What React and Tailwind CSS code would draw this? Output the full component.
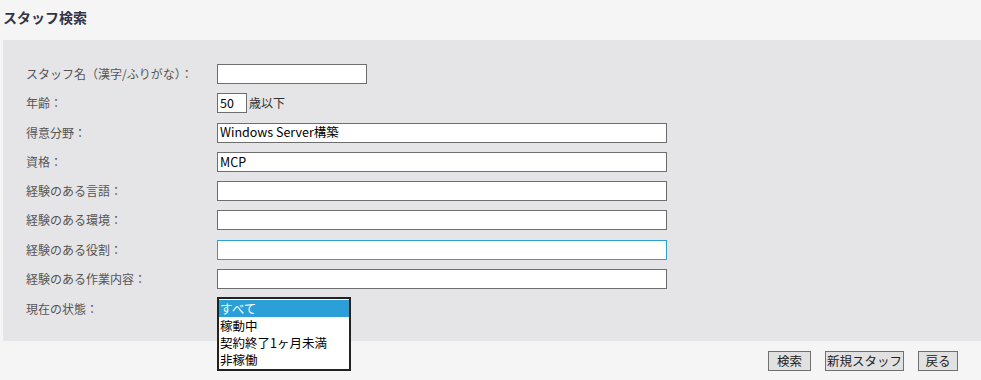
import React from "react";

const font = { fontFamily: '"Noto Sans CJK JP", "Noto Sans", sans-serif' };

function Row({ label, children, className = "" }) {
  return (
    <div className={"flex items-center h-5 " + className}>
      <div className="w-[191px] shrink-0 text-[12px] text-[#555] leading-none">{label}</div>
      {children}
    </div>
  );
}

function Box({ w = "w-[450px]", value = "", focus = false }) {
  return (
    <div
      className={
        "h-5 bg-white border flex items-center px-[2px] text-[12.5px] text-black leading-none whitespace-nowrap " +
        w +
        (focus ? " border-[#2a9fd8]" : " border-[#6e6e6e]")
      }
    >
      {value}
    </div>
  );
}

function Opt({ children, active = false }) {
  return (
    <div
      className={
        "h-[17px] flex items-center pl-[1px] leading-none overflow-hidden whitespace-nowrap " +
        (active ? "bg-[#2a9fd8] text-white" : "text-black")
      }
    >
      {children}
    </div>
  );
}

const btn =
  "h-5 p-0 flex items-center justify-center bg-[#e1e1e1] border border-[#707070] text-[12.5px] text-[#222] leading-none whitespace-nowrap";

export default function App() {
  return (
    <div className="w-[981px] h-[380px] bg-[#f5f5f5] overflow-hidden" style={font}>
      <div className="h-10 pl-[3px] flex items-center">
        <h1 className="text-[14px] font-bold text-[#333344] leading-none -mt-[7px]">スタッフ検索</h1>
      </div>
      <div className="ml-[3px] h-[301px] bg-[#e5e5e7] pt-6 pl-[23px] flex flex-col gap-[9.3px]">
        <Row label="スタッフ名（漢字/ふりがな）：">
          <Box w="w-[150px]" />
        </Row>
        <Row label="年齢：">
          <Box w="w-[30px]" value="50" />
          <span className="ml-[2px] text-[12px] text-[#333] leading-none">歳以下</span>
        </Row>
        <Row label="得意分野：">
          <Box value="Windows Server構築" />
        </Row>
        <Row label="資格：">
          <Box value="MCP" />
        </Row>
        <Row label="経験のある言語：">
          <Box />
        </Row>
        <Row label="経験のある環境：">
          <Box />
        </Row>
        <Row label="経験のある役割：">
          <Box focus />
        </Row>
        <Row label="経験のある作業内容：">
          <Box />
        </Row>
        <div className="flex items-start -mt-[1px]">
          <div className="w-[191px] shrink-0 text-[12px] text-[#555] leading-none pt-[6px]">現在の状態：</div>
          <div className="relative z-10 w-[134px] h-[74px] bg-white border-2 border-[#222] pt-[1px] text-[12.5px]">
            <Opt active>すべて</Opt>
            <Opt>稼動中</Opt>
            <Opt>契約終了1ヶ月未満</Opt>
            <Opt>非稼働</Opt>
          </div>
        </div>
      </div>
      <div className="flex justify-end gap-[14px] pr-[23px] pt-[10px]">
        <button className={btn + " w-[43px]"}>検索</button>
        <button className={btn + " w-[79px]"}>新規スタッフ</button>
        <button className={btn + " w-[40px]"}>戻る</button>
      </div>
    </div>
  );
}
